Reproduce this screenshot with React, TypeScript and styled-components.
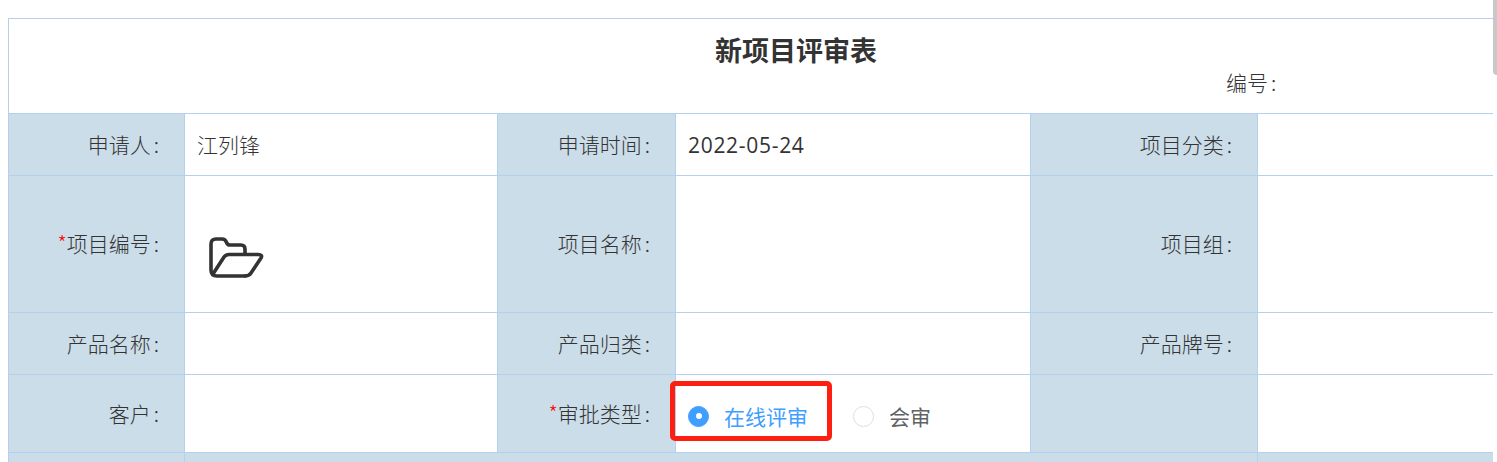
import styled, { createGlobalStyle } from "styled-components";

const GlobalStyle = createGlobalStyle`
    html, body {
        margin: 0;
        height: 462px;
        overflow: hidden;
        background: #fff;
    }
    body {
        font-family: "Noto Sans CJK SC", "Liberation Sans", sans-serif;
    }
`;

const Page = styled.div`
    position: relative;
    height: 462px;
    padding: 18px 4px 0 8px;
    box-sizing: border-box;
    overflow: hidden;
`;

const Viewport = styled.div`
    overflow: hidden;
    height: 444px;
`;

const Sheet = styled.table`
    width: 1574px;
    table-layout: fixed;
    border-collapse: separate;
    border-spacing: 0;
    border-top: 1px solid #b5cfee;
    border-left: 1px solid #b5cfee;
    font-size: 21px;
    font-weight: 300;
    color: #333;
`;

const Row = styled.tr<{ $height: number }>`
    height: ${(p) => p.$height}px;
`;

const TitleCell = styled.td`
    position: relative;
    padding: 0;
    border-bottom: 1px solid #b5cfee;
    text-align: center;
    vertical-align: top;
`;

const Title = styled.h1`
    margin: 12px 0 0;
    font-size: 27px;
    line-height: 38px;
    font-weight: 700;
    color: #333;
`;

const Number = styled.div`
    margin: 0 0 0 1217px;
    text-align: left;
    line-height: 26px;
    color: #333;
`;

const Label = styled.td`
    padding: 0 25px 2px 0;
    border-right: 1px solid #b5cfee;
    border-bottom: 1px solid #b5cfee;
    background: #cbdde9;
    text-align: right;
    color: #333;
    box-sizing: border-box;
`;

const Colon = styled.span`
    margin-left: 3px;
`;

const Star = styled.span`
    color: #f00;
`;

const Value = styled.td`
    padding: 0 12px 2px;
    border-right: 1px solid #b5cfee;
    border-bottom: 1px solid #b5cfee;
    background: #fff;
    color: #333;
    box-sizing: border-box;
`;

const DateText = styled.span`
    font-family: "Open Sans", "Liberation Sans", sans-serif;
    font-size: 21px;
    font-weight: 400;
    letter-spacing: 0.7px;
`;

const Band = styled.td<{ $open?: boolean }>`
    border-right: ${(p) => (p.$open ? "none" : "1px solid #b5cfee")};
    background: #cbdde9;
`;

const FolderIcon = styled.svg`
    display: block;
    width: 56px;
    height: 42px;
    margin: 27px 0 0 11px;
`;

const RadioGroup = styled.div`
    display: flex;
    align-items: center;
    margin-top: 7px;
`;

const Radio = styled.label<{ $checked?: boolean }>`
    display: flex;
    align-items: center;
    gap: 15px;
    margin-right: 45px;
    font-size: 21px;
    font-weight: 400;
    color: ${(p) => (p.$checked ? "#409eff" : "#606266")};
`;

const Dot = styled.span<{ $checked?: boolean }>`
    display: flex;
    align-items: center;
    justify-content: center;
    width: 21px;
    height: 21px;
    box-sizing: border-box;
    border-radius: 50%;
    border: 1px solid ${(p) => (p.$checked ? "#409eff" : "#dcdfe6")};
    background: ${(p) => (p.$checked ? "#409eff" : "#fff")};

    &::after {
        content: "";
        width: 6px;
        height: 6px;
        border-radius: 50%;
        background: #fff;
    }
`;

const Highlight = styled.div`
    position: absolute;
    left: 670px;
    top: 381px;
    width: 162px;
    height: 60px;
    box-sizing: border-box;
    border: 5px solid #ff1f10;
    border-radius: 5px;
    pointer-events: none;
`;

const ScrollThumb = styled.div`
    position: absolute;
    right: 0;
    top: 0;
    width: 4px;
    height: 75px;
    background: #c8c8c8;
    border-bottom-left-radius: 4px;
`;

function App() {
    return (
        <Page>
            <GlobalStyle />
            <Viewport>
                <Sheet>
                    <colgroup>
                        <col style={{ width: 176 }} />
                        <col style={{ width: 313 }} />
                        <col style={{ width: 178 }} />
                        <col style={{ width: 355 }} />
                        <col style={{ width: 227 }} />
                        <col style={{ width: 325 }} />
                    </colgroup>
                    <tbody>
                        <Row $height={95}>
                            <TitleCell colSpan={6}>
                                <Title>新项目评审表</Title>
                                <Number>
                                    编号<Colon>:</Colon>
                                </Number>
                            </TitleCell>
                        </Row>
                        <Row $height={62}>
                            <Label>
                                申请人<Colon>:</Colon>
                            </Label>
                            <Value>江列锋</Value>
                            <Label>
                                申请时间<Colon>:</Colon>
                            </Label>
                            <Value>
                                <DateText>2022-05-24</DateText>
                            </Value>
                            <Label>
                                项目分类<Colon>:</Colon>
                            </Label>
                            <Value />
                        </Row>
                        <Row $height={137}>
                            <Label>
                                <Star>*</Star>项目编号<Colon>:</Colon>
                            </Label>
                            <Value>
                                <FolderIcon
                                    viewBox="0 0 56 42"
                                    fill="none"
                                    stroke="#333"
                                    strokeWidth="3.6"
                                    strokeLinecap="round"
                                    strokeLinejoin="round"
                                >
                                    <path d="M37 18V13Q37 9 33 9H22Q19.5 9 18.5 6.5Q17.5 3 14 3H8Q3 3 3 8V34Q3 40 9 40H37" />
                                    <path d="M5 38L16 21Q18 18.5 21 18.5H50Q55 18.5 53 22L43 37Q41 40 37 40" />
                                </FolderIcon>
                            </Value>
                            <Label>
                                项目名称<Colon>:</Colon>
                            </Label>
                            <Value />
                            <Label>
                                项目组<Colon>:</Colon>
                            </Label>
                            <Value />
                        </Row>
                        <Row $height={62}>
                            <Label>
                                产品名称<Colon>:</Colon>
                            </Label>
                            <Value />
                            <Label>
                                产品归类<Colon>:</Colon>
                            </Label>
                            <Value />
                            <Label>
                                产品牌号<Colon>:</Colon>
                            </Label>
                            <Value />
                        </Row>
                        <Row $height={78}>
                            <Label>
                                客户<Colon>:</Colon>
                            </Label>
                            <Value />
                            <Label>
                                <Star>*</Star>审批类型<Colon>:</Colon>
                            </Label>
                            <Value>
                                <RadioGroup>
                                    <Radio $checked>
                                        <Dot $checked />
                                        在线评审
                                    </Radio>
                                    <Radio>
                                        <Dot />
                                        会审
                                    </Radio>
                                </RadioGroup>
                            </Value>
                            <Label />
                            <Value />
                        </Row>
                        <Row $height={30}>
                            <Band />
                            <Band $open />
                            <Band $open />
                            <Band $open />
                            <Band />
                            <Band $open />
                        </Row>
                    </tbody>
                </Sheet>
            </Viewport>
            <Highlight />
            <ScrollThumb />
        </Page>
    );
}

export default App;
